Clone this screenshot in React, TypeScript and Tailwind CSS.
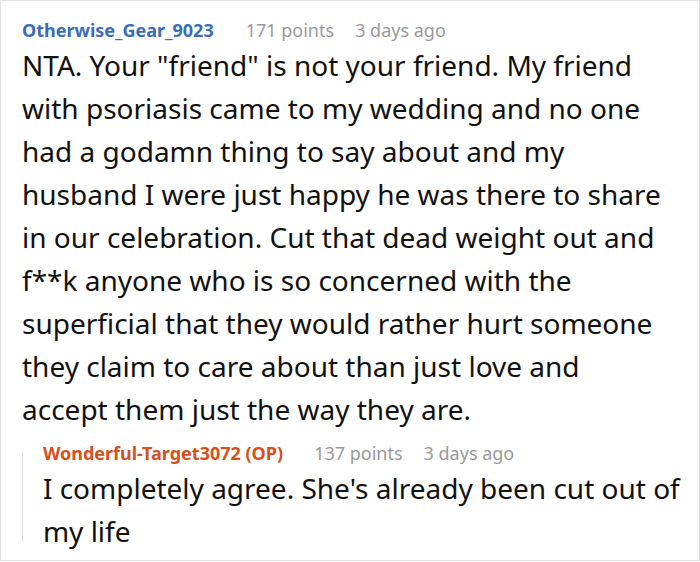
export default function App() {
  return (
    <div className="w-[700px] h-[562px] bg-white" style={{ fontFamily: '"Noto Sans", sans-serif' }}>
      <div className="h-[561px] border border-[#e3e3e3] pl-[21px] pr-[10px] pt-[15px]">
        <div className="flex items-baseline gap-[32px] text-[18px] leading-[28px]">
          <span className="font-bold text-[#3a6cb7]">Otherwise_Gear_9023</span>
          <span className="flex gap-[21px] text-[#999999]">
            <span>171 points</span>
            <span>3 days ago</span>
          </span>
        </div>
        <p className="mr-[18px] text-[28px] leading-[43px] text-[#111111]">
          NTA. Your "friend" is not your friend. My friend with psoriasis came to my wedding and no one had a godamn
          thing to say about and my husband I were just happy he was there to share in our celebration. Cut that dead
          weight out and f**k anyone who is so concerned with the superficial that they would rather hurt someone they
          claim to care about than just love and accept them just the way they are.
        </p>
        <div className="mt-[8px] flex">
          <div className="w-[1px] bg-[#dddddd] mt-[14px] mb-[12px]" />
          <div className="pl-[20px]">
            <div className="flex items-baseline gap-[31px] text-[18px] leading-[28px]">
              <span className="font-bold text-[#d4501c]">Wonderful-Target3072 (OP)</span>
              <span className="flex gap-[21px] text-[#999999]">
                <span>137 points</span>
                <span>3 days ago</span>
              </span>
            </div>
            <p className="text-[28px] leading-[43px] text-[#111111]">
              I completely agree. She's already been cut out of my life
            </p>
          </div>
        </div>
      </div>
    </div>
  )
}
